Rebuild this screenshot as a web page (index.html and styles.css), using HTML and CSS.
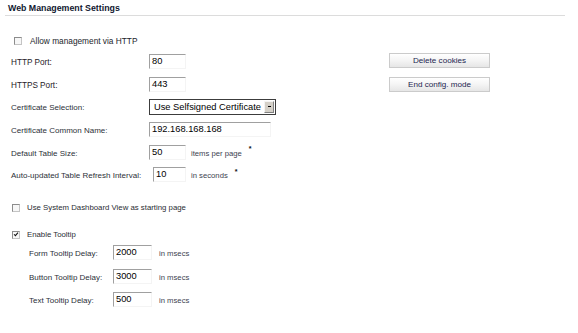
FILE: index.html
```html
<!DOCTYPE html>
<html>
<head>
<meta charset="utf-8">
<title>Web Management Settings</title>
<link rel="stylesheet" href="styles.css">
</head>
<body>
<div class="page">
  <div class="title">Web Management Settings</div>
  <div class="main">
    <div class="left">
      <div class="check-row check-first">
        <span class="cb"></span>
        <span class="check-label">Allow management via HTTP</span>
      </div>

      <div class="form-row row-first">
        <span class="label">HTTP Port:</span>
        <span class="input">80</span>
      </div>
      <div class="form-row">
        <span class="label">HTTPS Port:</span>
        <span class="input">443</span>
      </div>
      <div class="form-row">
        <span class="label small">Certificate Selection:</span>
        <span class="select"><span class="select-text">Use Selfsigned Certificate</span><span class="select-btn"><span class="arrow"></span></span></span>
      </div>
      <div class="form-row">
        <span class="label small">Certificate Common Name:</span>
        <span class="input input-wide">192.168.168.168</span>
      </div>
      <div class="form-row">
        <span class="label small">Default Table Size:</span>
        <span class="input">50</span>
        <span class="unit">items per page</span>
        <span class="star">*</span>
      </div>
      <div class="form-row">
        <span class="label small">Auto-updated Table Refresh Interval:</span>
        <span class="input input-narrow">10</span>
        <span class="unit">in seconds</span>
        <span class="star">*</span>
      </div>

      <div class="check-row check-dash">
        <span class="cb"></span>
        <span class="check-label">Use System Dashboard View as starting page</span>
      </div>
      <div class="check-row check-tip">
        <span class="cb checked"><svg viewBox="0 0 7 7" width="7" height="7"><path d="M1.2 3.2 L2.8 4.9 L5.8 1.4" fill="none" stroke="#111" stroke-width="1.2"/></svg></span>
        <span class="check-label">Enable Tooltip</span>
      </div>

      <div class="tip-row">
        <span class="tip-label">Form Tooltip Delay:</span>
        <span class="input tip-input">2000</span>
        <span class="unit tip-unit">in msecs</span>
      </div>
      <div class="tip-row">
        <span class="tip-label">Button Tooltip Delay:</span>
        <span class="input tip-input">3000</span>
        <span class="unit tip-unit">in msecs</span>
      </div>
      <div class="tip-row">
        <span class="tip-label">Text Tooltip Delay:</span>
        <span class="input tip-input">500</span>
        <span class="unit tip-unit">in msecs</span>
      </div>
    </div>

    <div class="right">
      <span class="btn">Delete cookies</span>
      <span class="btn">End config. mode</span>
    </div>
  </div>
</div>
</body>
</html>
```

FILE: styles.css
```css
html, body {
  margin: 0;
  padding: 0;
  background: #ffffff;
}
body {
  font-family: "Liberation Sans", Arial, sans-serif;
  font-size: 8.1px;
  color: #2a2d33;
}
.page {
  width: 578px;
  height: 333px;
  overflow: hidden;
}
.title {
  margin: 0 13px 0 5px;
  padding: 2px 0 0 3px;
  height: 13px;
  line-height: 13px;
  font-size: 8.8px;
  font-weight: bold;
  color: #101830;
  border-bottom: 1px solid #dcdcdc;
}
.main {
  display: flex;
}
.left {
  width: 389px;
  flex-shrink: 0;
}
.right {
  display: flex;
  flex-direction: column;
  gap: 9px;
  padding-top: 37px;
}
.btn {
  box-sizing: border-box;
  width: 101px;
  height: 15px;
  line-height: 13px;
  text-align: center;
  font-size: 8.1px;
  color: #1c2550;
  border: 1px solid #cbcbcb;
  background: linear-gradient(#ffffff, #f4f4f4 50%, #e6e6e6);
}

/* checkbox rows */
.check-row {
  display: flex;
  align-items: center;
  height: 12px;
  line-height: 12px;
}
.check-first {
  margin-top: 19px;
  padding-left: 14px;
}
.check-first .check-label {
  margin-left: 8px;
  font-size: 8.3px;
  color: #22252b;
}
.check-dash {
  margin-top: 16px;
  padding-left: 12px;
}
.check-tip {
  margin-top: 15px;
  padding-left: 12px;
}
.check-dash .check-label,
.check-tip .check-label {
  margin-left: 7px;
  font-size: 7.8px;
}
.cb {
  box-sizing: border-box;
  width: 8px;
  height: 8px;
  border: 1px solid #8c8c8c;
  border-right-color: #c4c4c4;
  border-bottom-color: #c4c4c4;
  background: #f7f7f7;
  display: flex;
  align-items: center;
  justify-content: center;
  flex-shrink: 0;
}
.cb svg {
  display: block;
}

/* form rows */
.form-row {
  display: flex;
  align-items: center;
  height: 22.6px;
  padding-left: 11px;
}
.row-first {
  margin-top: 2px;
  height: 24px;
}
.label {
  box-sizing: border-box;
  min-width: 138px;
  padding-right: 6px;
  padding-top: 2px;
  flex-shrink: 0;
  white-space: nowrap;
  font-size: 8.2px;
  color: #1f2228;
}
.label.small {
  font-size: 8px;
  color: #2c3038;
}
.input {
  box-sizing: border-box;
  width: 37px;
  height: 15px;
  line-height: 13px;
  padding-left: 2px;
  font-size: 9.3px;
  color: #000;
  border: 1px solid #a0a0a0;
  border-right-color: #f4f4f4;
  border-bottom-color: #f4f4f4;
  background: #fff;
  flex-shrink: 0;
}
.input-wide {
  width: 122px;
}
.input-narrow {
  width: 33px;
  margin-left: 4px;
}
.unit {
  margin-left: 5px;
  padding-top: 2px;
  font-size: 7.7px;
  color: #3c4250;
}
.star {
  margin-left: 7px;
  margin-top: -7px;
  font-size: 7px;
  font-weight: bold;
  color: #111;
}

/* select */
.select {
  box-sizing: border-box;
  width: 127px;
  height: 16px;
  display: flex;
  align-items: center;
  border: 1px solid #3c3c3c;
  background: #fff;
  padding: 1px;
  flex-shrink: 0;
}
.select-text {
  flex: 1;
  padding-left: 3px;
  font-size: 9.3px;
  line-height: 12px;
  color: #000;
  white-space: nowrap;
  overflow: hidden;
}
.select-btn {
  box-sizing: border-box;
  width: 10px;
  height: 12px;
  background: #d4d0c8;
  border: 1px solid #f4f4f4;
  border-right-color: #808080;
  border-bottom-color: #808080;
  display: flex;
  align-items: center;
  justify-content: center;
}
.arrow {
  width: 3px;
  height: 1px;
  background: #000;
}

/* tooltip rows */
.tip-row {
  display: flex;
  align-items: center;
  height: 23.5px;
  padding-left: 29px;
}
.tip-label {
  width: 84px;
  flex-shrink: 0;
  padding-top: 2px;
  font-size: 8px;
  color: #2c3038;
  white-space: nowrap;
}
.tip-input {
  width: 39px;
}
.tip-unit {
  margin-left: 7px;
}
```
